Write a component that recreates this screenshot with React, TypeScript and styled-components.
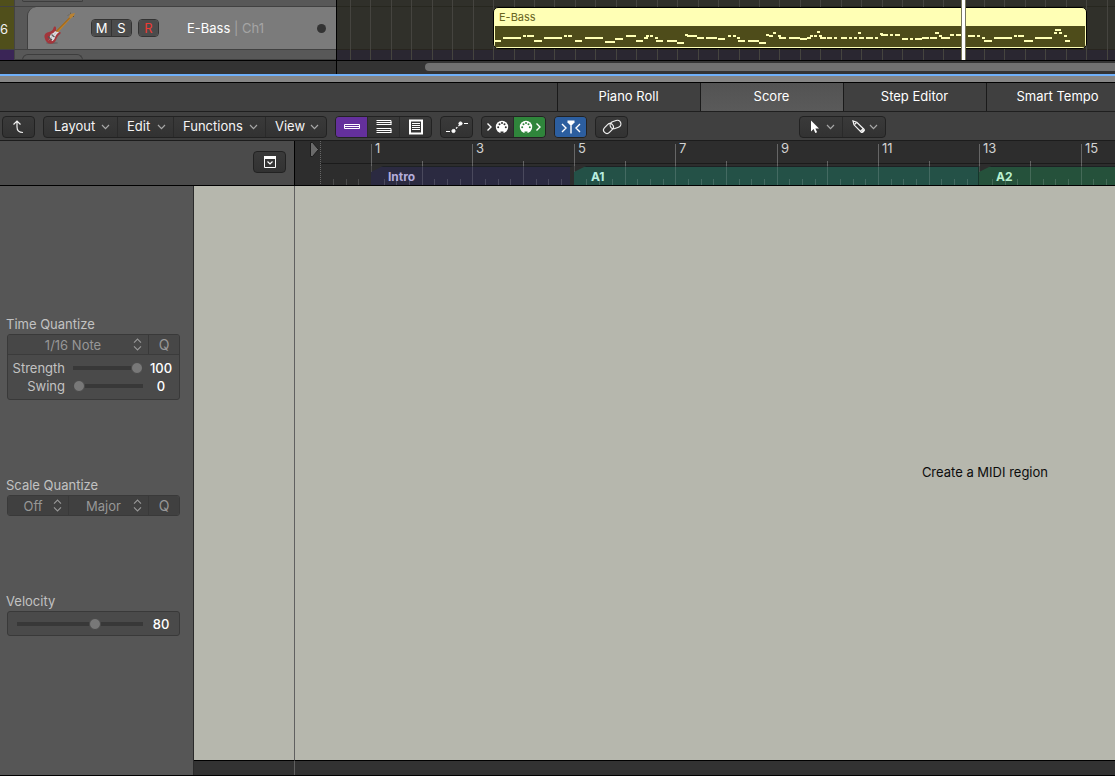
import React, { useState } from "react";
import styled, { createGlobalStyle, css } from "styled-components";

const GlobalStyle = createGlobalStyle`
  * { box-sizing: border-box; }
  html, body { margin: 0; background: #323232; }
  body, button, select, input {
    font-family: Inter, "Liberation Sans", sans-serif;
    font-size: 13px;
    line-height: 20px;
  }
  button, select { margin: 0; padding: 0; border: 0; background: none; color: inherit; cursor: default; }
`;

/* ---------- data ---------- */

// start, length and pitch row of every note in the region
const NOTES: number[][] = [
  [0, 6, 40], [8, 18, 37], [28, 3, 35], [32, 7, 35], [39, 8, 40], [49, 18, 37], [69, 3, 35], [73, 4, 35],
  [80, 7, 40], [90, 18, 37], [110, 10, 41], [120, 8, 38], [131, 10, 35], [141, 7, 40], [149, 4, 37],
  [151, 3, 35], [155, 3, 35], [160, 3, 37], [161, 7, 40], [172, 10, 40], [182, 7, 42], [190, 3, 34],
  [192, 10, 35], [202, 7, 37], [211, 11, 37], [223, 7, 38], [233, 3, 35], [238, 3, 35], [242, 3, 37],
  [243, 7, 40], [253, 11, 40], [264, 7, 42], [271, 3, 34], [274, 4, 35], [278, 3, 32], [283, 3, 35],
  [284, 7, 37], [294, 10, 37], [304, 1, 37], [300, 4, 37], [305, 7, 38], [312, 4, 37], [315, 3, 35],
  [319, 3, 35], [322, 3, 31], [324, 3, 35], [325, 6, 37], [332, 5, 37], [339, 3, 37], [346, 6, 37],
  [354, 3, 37], [359, 3, 37], [363, 3, 32], [364, 5, 37], [371, 7, 37], [380, 3, 37], [385, 3, 33],
  [386, 7, 34], [395, 3, 34], [400, 5, 34], [407, 6, 38], [415, 3, 38], [420, 7, 38], [427, 7, 37],
  [435, 7, 37], [440, 4, 32], [444, 3, 35], [446, 9, 37], [455, 4, 34], [461, 10, 34], [473, 7, 35],
  [482, 3, 35], [487, 3, 37], [489, 8, 40], [499, 18, 37], [519, 3, 35], [523, 6, 35], [529, 9, 40],
  [540, 17, 37], [559, 3, 32], [560, 6, 29], [564, 3, 32], [569, 3, 35], [570, 5, 40],
];

const RULER_START = 76;
const barX = (bar: number) => Math.round(RULER_START + ((bar - 1) * 507) / 10);
const ODD_BARS = [1, 3, 5, 7, 9, 11, 13, 15];
const QUARTERS = Array.from({ length: 200 }, (_, i) => i - 3);
const GRID = Array.from({ length: 120 }, (_, i) => Math.round(13 + (i * 593) / 29));

const MARKERS = [
  { name: "Intro", from: 1, to: 5, color: "#2b2a41", ink: "#b3acdb" },
  { name: "A1", from: 5, to: 13, color: "#245147", ink: "#b9eee0" },
  { name: "A2", from: 13, to: 33, color: "#25513b", ink: "#b9f0d0" },
];

/* ---------- tracks ---------- */

const Window = styled.div`
  display: flex;
  flex-direction: column;
  min-height: 100vh;
  overflow: hidden;
  color: #f2f2f2;
`;

const Tracks = styled.section`
  display: grid;
  grid-template-columns: 337px minmax(0, 1fr);
  height: 61px;
  border-bottom: 1px solid #000;
`;

const TrackList = styled.div`
  display: grid;
  grid-template-rows: 7px 43px 10px;
  background: #585858;
  border-right: 1px solid #000;
  overflow: hidden;
`;

const TrackRow = styled.div<{ $strip: string }>`
  display: grid;
  grid-template-columns: 15px minmax(0, 1fr);
  border-bottom: 1px solid #414141;
  & > :first-child { background: ${(p) => p.$strip}; }
`;

const TrackNumber = styled.span`
  display: flex;
  align-items: center;
  border-right: 1px solid #444;
  padding-top: 2px;
`;

const TrackStub = styled.div<{ $edge: "top" | "bottom" }>`
  width: 61px;
  border: 1px solid #3d3d3d;
  ${(p) =>
    p.$edge === "top"
      ? css`margin: 4px 0 0 7px; height: 12px; border-bottom: 0; border-radius: 6px 6px 0 0;`
      : css`margin: 0 0 0 7px; height: 2px; border-top: 0; border-radius: 0 0 6px 6px;`}
`;

const TrackHeader = styled.div`
  display: flex;
  align-items: center;
  margin-left: 12px;
  padding: 0 10px 0 15px;
  background: #7b7b7b;
  border-left: 1px solid #404040;
  border-radius: 9px 0 0 0;
`;

const TrackSwitches = styled.div<{ $gap: number }>`
  display: flex;
  margin-left: ${(p) => p.$gap}px;
  border: 1px solid #333;
  border-radius: 4px;
  overflow: hidden;
`;

const TrackButton = styled.button<{ $record?: boolean }>`
  width: 19px;
  height: 16px;
  background: #4b4b4b;
  line-height: 16px;
  color: ${(p) => (p.$record ? "#ee3b34" : "#fff")};
  & + & { width: 20px; border-left: 1px solid #333; }
`;

const TrackName = styled.div`
  flex: 1;
  margin-left: 28px;
  color: #a5a5a5;
  b { font-weight: 400; color: #fff; }
`;

const Dot = styled.i`
  width: 9px;
  height: 9px;
  border-radius: 50%;
  background: #333;
`;

const Arrange = styled.div`
  position: relative;
  overflow: hidden;
  background: linear-gradient(#30302a 6px, #27271f 6px 7px, #30302a 7px 49px, #28251f 49px 50px, #2a2731 50px);
`;

const GridLines = styled.svg`
  position: absolute;
  inset: 0;
  width: 100%;
  height: 100%;
`;

const Region = styled.div`
  position: absolute;
  left: 156px;
  top: 7px;
  width: 594px;
  height: 42px;
  border: 1px solid #000;
  border-radius: 5px;
  background: #ffffb5;
  overflow: hidden;
`;

const RegionName = styled.div`
  height: 18px;
  padding-left: 5px;
  font-size: 11px;
  line-height: 18px;
  color: #68651f;
`;

const RegionNotes = styled.svg`
  display: block;
  width: 590px;
  height: 21px;
  margin-left: 1px;
  background: #4e4c1a;
`;

const Playhead = styled.div`
  position: absolute;
  left: 624px;
  top: 0;
  bottom: 0;
  width: 5px;
  background: #fff;
  border: solid #77775a;
  border-width: 0 1px;
`;

const ScrollRow = styled.div`
  display: grid;
  grid-template-columns: 337px minmax(0, 1fr);
  height: 13px;
  background: #333;
`;

const ScrollCorner = styled.div`
  border-right: 1px solid #000;
`;

const ScrollThumb = styled.div`
  height: 8px;
  margin: 2px 0 0 88px;
  border-radius: 4px 0 0 4px;
  background: #707070;
`;

const Splitter = styled.div`
  height: 9px;
  border-top: 2px solid #6fb0fa;
  border-bottom: 1px solid #000;
  background: #868686;
`;

/* ---------- tabs and toolbar ---------- */

const Tabs = styled.nav`
  display: flex;
  height: 29px;
  padding-left: calc(50% - 1px);
  background: #404040;
  border-bottom: 1px solid #1f1f1f;
`;

const Tab = styled.button<{ $active?: boolean }>`
  flex: 0 0 143px;
  padding-bottom: 2px;
  border-left: 1px solid #1a1a1a;
  background: ${(p) => (p.$active ? "linear-gradient(#535353, #5a5a5a)" : "none")};
  color: #fff;
`;

const Toolbar = styled.div`
  display: flex;
  align-items: center;
  gap: 8px;
  height: 29px;
  padding: 1px 2px 0;
  background: #404040;
  border-bottom: 1px solid #1c1c1c;
`;

const Group = styled.div<{ $push?: boolean }>`
  display: flex;
  flex: none;
  height: 22px;
  margin-left: ${(p) => (p.$push ? "163px" : "0")};
  border: 1px solid #222;
  border-radius: 4px;
  background: linear-gradient(#3a3a3a, #323232);
  overflow: hidden;
`;

const ToolButton = styled.button<{ $fill?: string }>`
  display: flex;
  align-items: center;
  justify-content: center;
  width: 31px;
  background: ${(p) => p.$fill ?? "none"};
  & + & { width: 32px; border-left: 1px solid #2a2a2a; }
  svg { display: block; flex: none; }
`;

const MenuButton = styled.button<{ $w: number }>`
  display: flex;
  align-items: center;
  justify-content: space-between;
  width: ${(p) => p.$w}px;
  padding: 0 7px 2px 10px;
  color: #f4f4f4;
  & + & { border-left: 1px solid #2a2a2a; padding-left: 9px; }
  svg { position: relative; top: 1px; }
`;

/* ---------- ruler ---------- */

const RulerRow = styled.div`
  display: grid;
  grid-template-columns: 295px minmax(0, 1fr);
  height: 45px;
  border-bottom: 1px solid #000;
  background: #2d2d2d;
`;

const RulerSide = styled.div`
  display: flex;
  align-items: center;
  justify-content: flex-end;
  padding: 0 8px 3px 0;
  background: #4b4b4b;
  border-right: 1px solid #000;
`;

const Ruler = styled.div`
  position: relative;
  display: grid;
  grid-template-rows: 22px 3px 19px;
  overflow: hidden;
`;

const BarNumbers = styled.div`
  display: flex;
  padding-left: 76px;
`;

const BarNumber = styled.span`
  flex: none;
  margin-top: 3px;
  padding-left: 3px;
  border-left: 1px solid #666;
  line-height: 8px;
  color: #d2d2d2;
`;

const RulerLine = styled.div`
  margin-left: 26px;
  border-top: 1px solid #1b1b1b;
`;

const Markers = styled.div`
  display: flex;
  padding-left: 76px;
`;

const Marker = styled.div<{ $color: string; $ink: string; $inset: boolean }>`
  flex: none;
  padding: 1px 0 0 17px;
  border-top: 1px solid #1d2124;
  border-right: ${(p) => (p.$inset ? "4px solid #2d2d2d" : "1px solid #17352c")};
  background: ${(p) => p.$color};
  clip-path: polygon(0 6px, 12px 0, 100% 0, 100% 100%, 0 100%);
  font-size: 12px;
  font-weight: 700;
  line-height: 18px;
  color: ${(p) => p.$ink};
`;

const RulerDrawing = styled.svg`
  position: absolute;
  inset: 0;
  width: 100%;
  height: 100%;
  pointer-events: none;
`;

/* ---------- editor ---------- */

const Editor = styled.main`
  flex: 1;
  display: grid;
  grid-template-columns: 194px minmax(0, 1fr);
  border-bottom: 1px solid #000;
`;

const Inspector = styled.aside`
  display: flex;
  flex-direction: column;
  gap: 75px;
  padding: 128px 13px 24px 6px;
  background: #565656;
  border-right: 1px solid #2b2b2b;
  color: #c2c2c2;
`;

const Section = styled.section``;

const SectionTitle = styled.h2`
  margin: 0;
  font-size: 13px;
  line-height: 20px;
  font-weight: 400;
`;

const Box = styled.div`
  margin-left: 1px;
  border: 1px solid #393939;
  border-radius: 3px;
  background: #4a4a4a;
  overflow: hidden;
`;

const PickerRow = styled.div<{ $dark?: boolean; $ruled?: boolean }>`
  display: flex;
  height: ${(p) => (p.$ruled ? 20 : 19)}px;
  background: ${(p) => (p.$dark ? "#404040" : "#474747")};
  border-bottom: ${(p) => (p.$ruled ? "1px solid #3b3b3b" : "0")};
  color: #979797;
`;

const Picker = styled.label<{ $w?: number }>`
  position: relative;
  display: flex;
  flex: ${(p) => (p.$w ? `0 0 ${p.$w}px` : 1)};
  min-width: 0;
  border-right: 1px solid #393939;
  select {
    appearance: none;
    flex: 1;
    min-width: 0;
    padding-right: 10px;
    line-height: 18px;
    text-align: center;
    text-align-last: center;
  }
  svg { position: absolute; right: 6px; top: 3px; pointer-events: none; }
`;

const QButton = styled.button`
  width: 30px;
  padding-bottom: 1px;
  font-size: 14px;
  line-height: 17px;
`;

const SliderRows = styled.div`
  padding: 3px 0 5px;
`;

const SliderRow = styled.label<{ $tall?: boolean }>`
  display: grid;
  grid-template-columns: ${(p) => (p.$tall ? "minmax(0, 1fr)" : "57px minmax(0, 1fr)")} 36px;
  align-items: center;
  height: ${(p) => (p.$tall ? 23 : 18)}px;
  padding-left: ${(p) => (p.$tall ? 9 : 0)}px;
  span { text-align: right; }
  output { text-align: center; color: #fff; font-weight: 500; }
`;

const Slider = styled.input<{ $gap: number }>`
  appearance: none;
  width: calc(100% - ${(p) => p.$gap}px);
  height: 12px;
  margin: 0 0 0 ${(p) => p.$gap}px;
  background: linear-gradient(#383838, #383838) center / 100% 4px no-repeat;
  &::-webkit-slider-thumb {
    appearance: none;
    width: 12px;
    height: 12px;
    border: 1px solid #4a4a4a;
    border-radius: 50%;
    background: #787878;
  }
`;

const ScorePane = styled.div`
  display: grid;
  grid-template-columns: 101px minmax(0, 1fr);
  grid-template-rows: minmax(0, 1fr) 15px;
  background: #b6b7ad;
`;

const PageEdge = styled.div`
  border-right: 1px solid #606060;
`;

const Score = styled.div`
  display: flex;
  align-items: center;
  justify-content: flex-end;
  padding: 0 67px 2px 0;
  color: #0c0c0c;
`;

const BottomBar = styled.div<{ $edge?: boolean }>`
  background: #323232;
  border-top: 1px solid #000;
  border-right: ${(p) => (p.$edge ? "1px solid #606060" : "0")};
`;

/* ---------- icons ---------- */

const Chevron = () => (
  <svg width="9" height="6" viewBox="0 0 9 6" fill="none" stroke="#a6a6a6" strokeWidth="1.2">
    <path d="M1 1l3.5 3.6L8 1" />
  </svg>
);

const UpDown = () => (
  <svg width="9" height="13" viewBox="0 0 9 13" fill="none" stroke="#989898" strokeWidth="1.1">
    <path d="M1 4.6L4.5 1 8 4.6M1 8.4L4.5 12 8 8.4" />
  </svg>
);

const BassIcon = () => (
  <svg width="34" height="36" viewBox="0 0 34 36">
    <ellipse cx="9" cy="33" rx="6" ry="1" fill="#666" />
    <path d="M12 22L26.500 7l1.300 1.200L14 23.500z" fill="#c08025" />
    <path d="M13 21.500L27 7.500" stroke="#7b4c12" strokeWidth=".7" />
    <path d="M26 7l1.500-3 4.500-1-1 2.500-3 3z" fill="#b98233" />
    <path d="M26 4.500l-1 1M28 2.800l-1 .8M31 6l-1 1" stroke="#5d4a2b" strokeWidth=".8" />
    <path d="M1.500 27c-.4-3 2-4.500 4.500-5 2-.5 4-1.500 4.500-4 .5-2 2.200-1.800 2.500-.3.3 1.500-.5 3 .3 4 1 1.100 2.400.8 3.700.3.900 0 .9 1.200.2 2-2 1.500-2.800 2.500-3.800 5-1 3-2.900 4.800-5.900 4.800C4.500 33.600 2 30.500 1.500 27z" fill="#a3353b" />
    <path d="M8 24c2-.8 3.500-1.500 4-3 1.200 1 2.800 1.300 4.300.8-1.800 1.800-3.600 3-4.300 5.700-.4 1.800-1.500 3-3 3.700-.3-1.500-2.200-2.200-2.600-3.700z" fill="#dfe0e4" />
    <path d="M5 26.500l4 3.500M8.500 24.500l3 2.500" stroke="#555" strokeWidth="1.200" />
    <path d="M5.500 30.500L13 22.500" stroke="#999" strokeWidth=".6" />
  </svg>
);

const UpIcon = () => (
  <svg width="13" height="16" viewBox="0 0 13 16" fill="none" stroke="#f0f0f0" strokeWidth="1.200">
    <path d="M1.500 5.500L5 2l3.500 3.500M5 2v6c0 3 1.500 5.500 6 5.500" />
  </svg>
);

const SingleIcon = () => (
  <svg width="16" height="16" viewBox="0 0 16 16" fill="none" stroke="#fff">
    <path d="M.5 5.500h15v4H.5zM.5 7.500h15" />
  </svg>
);

const WrappedIcon = () => (
  <svg width="16" height="16" viewBox="0 0 16 16" fill="none" stroke="#fff">
    <path d="M.5 1.500h14.500v4M.5 3.500h15M.5 5.500h15M.5 9.500h14.500v4M.5 11.500h15M.5 13.500h15" />
  </svg>
);

const PageIcon = () => (
  <svg width="16" height="16" viewBox="0 0 16 16" fill="none" stroke="#fff">
    <path d="M2 1.500h12v13H2z" strokeWidth="2" />
    <path d="M4 4.500h8M4 6.500h8M4 8.500h8M4 10.500h8" />
  </svg>
);

const AutomationIcon = () => (
  <svg width="24" height="16" viewBox="0 0 24 16" fill="#fff" stroke="#fff">
    <path d="M1 12.500h4M19 4.500h4" strokeWidth="1" />
    <path d="M8.500 12l7-7" strokeWidth="1.200" strokeDasharray="2 1.500" />
    <circle cx="8.500" cy="12" r="1.600" />
    <circle cx="15.500" cy="4.500" r="1.600" />
  </svg>
);

const MidiIcon = ({ out, hole }: { out?: boolean; hole: string }) => (
  <svg width="24" height="14" viewBox="0 0 24 14">
    <path d={out ? "M18.500 3.500l3.500 3.500-3.500 3.500" : "M1.500 3.500L5 7 1.500 10.500"} fill="none" stroke="#fff" strokeWidth="1.400" />
    <g transform={out ? "translate(-8 0)" : undefined}>
      <circle cx="16" cy="7" r="6.200" fill="#fff" />
      <path d="M14.500 13.500v-2h3v2z" fill={hole} />
      <g fill={hole}>
        <circle cx="12.200" cy="7.300" r="1" />
        <circle cx="13.500" cy="4.300" r="1" />
        <circle cx="16" cy="3" r="1" />
        <circle cx="18.500" cy="4.300" r="1" />
        <circle cx="19.800" cy="7.300" r="1" />
      </g>
    </g>
  </svg>
);

const CatchIcon = () => (
  <svg width="22" height="16" viewBox="0 0 22 16" fill="none" stroke="#fff" strokeWidth="1.400">
    <path d="M2 5L6 9 2 13M20 5L16 9 20 13M11 5v9.500" />
    <path d="M7.500 1.500h7v2l-2.500 2.500h-2L7.500 3.500z" fill="#fff" stroke="none" />
  </svg>
);

const LinkIcon = () => (
  <svg width="20" height="16" viewBox="0 0 20 16" fill="none" stroke="#eee" strokeWidth="1.200">
    <rect x="-5.500" y="-3.400" width="11" height="6.800" rx="3.400" transform="translate(6.500 9.500) rotate(-45)" />
    <rect x="-5.500" y="-3.600" width="11" height="7.200" rx="3.600" transform="translate(13.500 5.500) rotate(-20)" />
  </svg>
);

const PointerIcon = () => (
  <svg width="10" height="14" viewBox="0 0 10 14" fill="#fff">
    <path d="M1 .5v11l2.600-2.400 1.700 4 1.800-.8-1.700-3.800H9z" />
  </svg>
);

const PencilIcon = () => (
  <svg width="14" height="14" viewBox="0 0 14 14" fill="none" stroke="#f4f4f4" strokeWidth="1.200">
    <path d="M1 1l1 3.800 7.300 7.400c1 .9 3.800-1.600 2.900-2.700L4.800 2.300z" />
    <path d="M2.500 4.500L4.500 2.500M8.500 11.300l3-2.900" />
    <path d="M10 12l2-2" strokeWidth="2" />
  </svg>
);

const PanelIcon = () => (
  <svg width="14" height="14" viewBox="0 0 14 14" fill="none" stroke="#fff">
    <path d="M1 2.500h12" strokeWidth="3" />
    <path d="M1.500 1.500v11h11v-11" strokeWidth="1" />
    <path d="M4.500 6.500L7 9l2.500-2.500" strokeWidth="1.200" />
  </svg>
);

/* ---------- page ---------- */

const TABS = ["Piano Roll", "Score", "Step Editor", "Smart Tempo"];
const MENUS = [
  { label: "Layout", w: 73 },
  { label: "Edit", w: 56 },
  { label: "Functions", w: 92 },
  { label: "View", w: 61 },
];

export default function App() {
  const [tab, setTab] = useState("Score");
  const [strength, setStrength] = useState(100);
  const [swing, setSwing] = useState(0);
  const [velocity, setVelocity] = useState(80);

  return (
    <Window>
      <GlobalStyle />
      <Tracks>
        <TrackList>
          <TrackRow $strip="#504f1b">
            <TrackNumber />
            <TrackStub $edge="bottom" />
          </TrackRow>
          <TrackRow $strip="#504f1b">
            <TrackNumber>6</TrackNumber>
            <TrackHeader>
              <BassIcon />
              <TrackSwitches $gap={14}>
                <TrackButton aria-label="Mute">M</TrackButton>
                <TrackButton aria-label="Solo">S</TrackButton>
              </TrackSwitches>
              <TrackSwitches $gap={6}>
                <TrackButton $record aria-label="Record">R</TrackButton>
              </TrackSwitches>
              <TrackName>
                <b>E-Bass</b> | Ch1
              </TrackName>
              <Dot />
            </TrackHeader>
          </TrackRow>
          <TrackRow $strip="#3a2556">
            <TrackNumber />
            <TrackStub $edge="top" />
          </TrackRow>
        </TrackList>
        <Arrange>
          <GridLines aria-hidden="true">
            {GRID.map((x) => (
              <rect key={x} x={x} width="1" height="60" fill="#45443f" />
            ))}
          </GridLines>
          <Region>
            <RegionName>E-Bass</RegionName>
            <RegionNotes viewBox="0 0 590 21" aria-hidden="true">
              {NOTES.map(([x, w, y]) => (
                <rect key={`${x}-${y}`} x={x} y={y - 26} width={w} height="2" fill="#ffffb5" />
              ))}
            </RegionNotes>
          </Region>
          <Playhead />
        </Arrange>
      </Tracks>
      <ScrollRow>
        <ScrollCorner />
        <ScrollThumb />
      </ScrollRow>
      <Splitter />

      <Tabs>
        {TABS.map((name) => (
          <Tab key={name} $active={tab === name} onClick={() => setTab(name)}>
            {name}
          </Tab>
        ))}
      </Tabs>

      <Toolbar>
        <Group>
          <ToolButton aria-label="Up one level"><UpIcon /></ToolButton>
        </Group>
        <Group>
          {MENUS.map((m) => (
            <MenuButton key={m.label} $w={m.w}>
              {m.label}
              <Chevron />
            </MenuButton>
          ))}
        </Group>
        <Group>
          <ToolButton $fill="#64309c" aria-label="Linear view"><SingleIcon /></ToolButton>
          <ToolButton aria-label="Wrapped view"><WrappedIcon /></ToolButton>
          <ToolButton aria-label="Page view"><PageIcon /></ToolButton>
        </Group>
        <Group>
          <ToolButton aria-label="Automation"><AutomationIcon /></ToolButton>
        </Group>
        <Group>
          <ToolButton aria-label="MIDI in"><MidiIcon hole="#343434" /></ToolButton>
          <ToolButton $fill="#2f853b" aria-label="MIDI out"><MidiIcon out hole="#2f853b" /></ToolButton>
        </Group>
        <Group>
          <ToolButton $fill="#2c5e9f" aria-label="Catch playhead"><CatchIcon /></ToolButton>
        </Group>
        <Group>
          <ToolButton aria-label="Link"><LinkIcon /></ToolButton>
        </Group>
        <Group $push>
          <MenuButton $w={42} aria-label="Pointer tool"><PointerIcon /><Chevron /></MenuButton>
          <MenuButton $w={43} aria-label="Pencil tool"><PencilIcon /><Chevron /></MenuButton>
        </Group>
      </Toolbar>

      <RulerRow>
        <RulerSide>
          <Group>
            <ToolButton aria-label="Track options"><PanelIcon /></ToolButton>
          </Group>
        </RulerSide>
        <Ruler>
          <BarNumbers>
            {ODD_BARS.map((bar) => (
              <BarNumber key={bar} style={{ width: barX(bar + 2) - barX(bar) }}>
                {bar}
              </BarNumber>
            ))}
          </BarNumbers>
          <RulerLine />
          <Markers>
            {MARKERS.map((m) => (
              <Marker
                key={m.name}
                $color={m.color}
                $ink={m.ink}
                $inset={m.name === "Intro"}
                style={{ width: barX(m.to) - barX(m.from) }}
              >
                {m.name}
              </Marker>
            ))}
          </Markers>
          <RulerDrawing aria-hidden="true">
            <path d="M25.500 0v44" stroke="#666" strokeDasharray="1 1" />
            <path d="M15.500 1.500h2l6 7-6 7h-2z" fill="#6a6a6a" stroke="#1c1c1c" />
            {QUARTERS.map((q) => {
              const x = Math.round(RULER_START + (q * 507) / 40);
              const bar = q % 8 === 0;
              const half = q % 8 === 4;
              const opensMarker = bar && MARKERS.some((m) => m.from === q / 4 + 1);
              const top = bar ? 22 : half ? 20 : 38;
              const height = opensMarker ? 9 : bar ? 22 : half ? 24 : 6;
              return (
                <g key={q} fill="#fff">
                  <rect x={x} y={top} width="1" height={height} opacity="0.15" />
                  {(bar || half) && <rect x={x} y={top} width="1" height={25 - top} opacity="0.15" />}
                </g>
              );
            })}
          </RulerDrawing>
        </Ruler>
      </RulerRow>

      <Editor>
        <Inspector>
          <Section>
            <SectionTitle>Time Quantize</SectionTitle>
            <Box>
              <PickerRow $ruled>
                <Picker>
                  <select aria-label="Time quantize value">
                    <option>1/16 Note</option>
                  </select>
                  <UpDown />
                </Picker>
                <QButton>Q</QButton>
              </PickerRow>
              <SliderRows>
                <SliderRow>
                  <span>Strength</span>
                  <Slider $gap={8} type="range" value={strength} onChange={(e) => setStrength(+e.target.value)} />
                  <output>{strength}</output>
                </SliderRow>
                <SliderRow>
                  <span>Swing</span>
                  <Slider $gap={8} type="range" value={swing} onChange={(e) => setSwing(+e.target.value)} />
                  <output>{swing}</output>
                </SliderRow>
              </SliderRows>
            </Box>
          </Section>
          <Section>
            <SectionTitle>Scale Quantize</SectionTitle>
            <Box>
              <PickerRow $dark>
                <Picker $w={61}>
                  <select aria-label="Scale root">
                    <option>Off</option>
                  </select>
                  <UpDown />
                </Picker>
                <Picker>
                  <select aria-label="Scale">
                    <option>Major</option>
                  </select>
                  <UpDown />
                </Picker>
                <QButton>Q</QButton>
              </PickerRow>
            </Box>
          </Section>
          <Section>
            <SectionTitle>Velocity</SectionTitle>
            <Box>
              <SliderRow $tall>
                <Slider
                  $gap={0}
                  type="range"
                  aria-label="Velocity"
                  min={0}
                  max={127}
                  value={velocity}
                  onChange={(e) => setVelocity(+e.target.value)}
                />
                <output>{velocity}</output>
              </SliderRow>
            </Box>
          </Section>
        </Inspector>
        <ScorePane>
          <PageEdge />
          <Score>Create a MIDI region</Score>
          <BottomBar $edge />
          <BottomBar />
        </ScorePane>
      </Editor>
    </Window>
  );
}
